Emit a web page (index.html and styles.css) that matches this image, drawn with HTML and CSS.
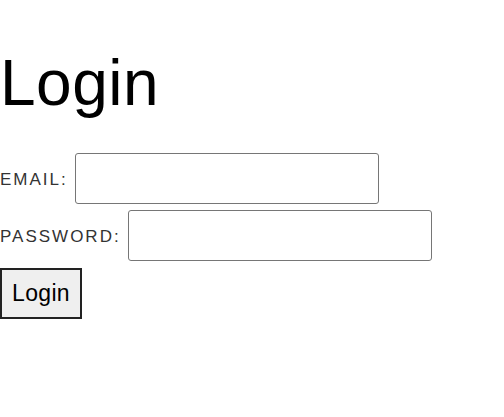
FILE: index.html
```html
<!DOCTYPE html>
<html>
<head>
<meta charset="utf-8">
<link rel="stylesheet" href="styles.css">
</head>
<body>
<h1 class="title">Login</h1>
<form class="form">
  <div class="row">
    <label class="label" for="email">Email:</label>
    <input class="field" id="email" type="email">
  </div>
  <div class="row">
    <label class="label" for="password">Password:</label>
    <input class="field" id="password" type="password">
  </div>
  <div class="row row-action">
    <button class="btn" type="button">Login</button>
  </div>
</form>
</body>
</html>
```
FILE: styles.css
```css
html, body {
  margin: 0;
  padding: 0;
  background: #fff;
  font-family: "Liberation Sans", Arial, sans-serif;
}
.title {
  font-size: 64px;
  font-weight: normal;
  letter-spacing: 0.5px;
  line-height: 74px;
  margin: 46px 0 33px;
  color: #000;
}
.form {
  display: flex;
  flex-direction: column;
  gap: 6px;
}
.row {
  display: flex;
  align-items: center;
}
.row-action {
  margin-top: 1px;
}
.label {
  font-size: 17px;
  letter-spacing: 2px;
  text-transform: uppercase;
  color: #333;
  margin-right: 7px;
  padding-top: 2px;
}
.field {
  box-sizing: border-box;
  width: 304px;
  height: 51px;
  border: 1px solid #767676;
  border-radius: 3px;
  margin: 0;
  padding: 0 8px;
  font-size: 20px;
}
.btn {
  box-sizing: border-box;
  height: 51px;
  width: 82px;
  margin: 0;
  padding: 0;
  font-family: "Liberation Sans", Arial, sans-serif;
  font-size: 23px;
  letter-spacing: 0.3px;
  color: #000;
  background: #efefef;
  border: 2px solid #222;
  border-radius: 0;
}
```
